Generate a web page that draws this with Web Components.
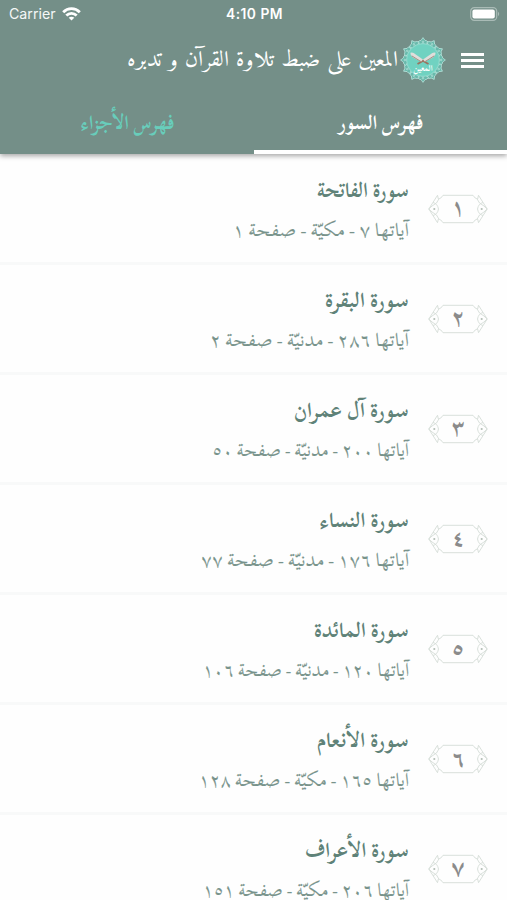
<!DOCTYPE html>
<html lang="ar">
<head>
<meta charset="utf-8">
<title>المعين</title>
<style>
  body{
    margin: 0;
    background: #fefefe;
    font-family: "Scheherazade New", "Scheherazade", "Amiri", "Noto Naskh Arabic", "DejaVu Sans", sans-serif;
    overflow: hidden;
  }
</style>
</head>
<body>
<quran-app></quran-app>

<script>
// a single line of rtl text, set to a known width
class FitText extends HTMLElement {

  connectedCallback() {
    let w = this.getAttribute( "width" );
    let h = this.getAttribute( "height" ) || 32;
    let size = this.getAttribute( "size" ) || 18;
    let weight = this.getAttribute( "weight" ) || 400;
    this.attachShadow( {mode:"open"} );
    this.shadowRoot.innerHTML = `
      <style>
        :host{ display: block; width: ${w}px; height: ${h}px; }
        svg{ display: block; overflow: visible; }
        text{ fill: currentColor; direction: rtl; }
        :host([plain]) text{
          font-feature-settings: "calt" 0, "liga" 0;
          word-spacing: -1px;
          stroke: currentColor;
          stroke-width: .15px;
        }
      </style>
      <svg width="${w}" height="${h}">
        <text x="${w}" y="${h - 10}" font-size="${size}" font-weight="${weight}"
          textLength="${w}" lengthAdjust="spacingAndGlyphs"></text>
      </svg>
    `;
    this.shadowRoot.querySelector("text").textContent = this.getAttribute( "text" );
  }
}
window.customElements.define( "fit-text", FitText );


const statusTemplate = document.createElement("template");
statusTemplate.innerHTML = `
  <style>
    :host{
      display: grid;
      grid-template-columns: 1fr auto 1fr;
      align-items: center;
      height: 27px;
      padding: 0 7px 0 9px;
      font: 14.2px Inter, sans-serif;
      color: #f4f8f7;
    }
    .left{ display: flex; align-items: center; gap: 6px; }
    .time{ font-weight: 600; font-size: 13.8px; letter-spacing: .5px; color: #fff; }
    .battery{ justify-self: end; }
    svg{ display: block; }
  </style>
  <div class="left">
    <span>Carrier</span>
    <svg width="19" height="14" viewBox="0 0 19 14" fill="none" stroke="#fff" stroke-width="2.8">
      <path d="M1.2 5.2C5.8.5 13.2.5 17.8 5.2"/>
      <path d="M4.3 8.6C7.3 5.7 11.7 5.7 14.7 8.6"/>
      <path d="M9.5 13.6 6.7 10.8C8.3 9.3 10.7 9.3 12.3 10.8Z" fill="#fff" stroke="none"/>
    </svg>
  </div>
  <span class="time">4:10 PM</span>
  <svg class="battery" width="30" height="14" viewBox="0 0 30 14">
    <rect x=".7" y=".7" width="26" height="12.6" rx="3.6" fill="none" stroke="#a9bbb6" stroke-width="1.2"/>
    <rect x="2.4" y="2.4" width="22.4" height="9.2" rx="2" fill="#fff"/>
    <path d="M28 4.8Q30.4 7 28 9.2Z" fill="#a9bbb6"/>
  </svg>
`;

class StatusBar extends HTMLElement {
  constructor() {
    super();
    this.attachShadow( {mode:"open"} );
    this.shadowRoot.appendChild( statusTemplate.content.cloneNode(true) );
  }
}
window.customElements.define( "status-bar", StatusBar );


class AppLogo extends HTMLElement {
  constructor() {
    super();
    this.attachShadow( {mode:"open"} );
    // scalloped lace ring, one petal every 30 degrees
    let petals = "";
    for( let a = 0; a < 360; a += 30 )
      petals += `<g transform="rotate(${a} 23 23)">
        <path d="M17.5 5.6Q19 3.2 21 3.4L23 .6L25 3.4Q27 3.2 28.5 5.6Q26 8.4 23 6.6Q20 8.4 17.5 5.6Z"/>
        <circle cx="23" cy="4.8" r=".8"/></g>`;
    this.shadowRoot.innerHTML = `
      <style>
        :host{ display: block; width: 46px; height: 46px; }
        svg{ display: block; }
      </style>
      <svg width="46" height="46" viewBox="0 0 46 46">
        <circle cx="23" cy="23" r="18.8" fill="#82c9bd"/>
        <g fill="#69b9ab" stroke="#b5e2da" stroke-width=".8">${petals}</g>
        <circle cx="23" cy="23" r="16.2" fill="#70d2c1" stroke="#8fdccf" stroke-width=".7"/>
        <path d="M17.5 27 31 19.2M28.5 27 15 19.2" stroke="#9a7460" stroke-width="1.9"/>
        <path d="M10.4 15.7Q13.4 15 15.4 17.2L23 22.6 21 24.8 12.6 20.2Q10.3 18.8 10.4 15.7Z" fill="#e0dedb"/>
        <path d="M35.6 15.7Q32.6 15 30.6 17.2L23 22.6 25 24.8 33.4 20.2Q35.7 18.8 35.6 15.7Z" fill="#e0dedb"/>
        <path d="M11.8 18.9 21.3 24.8M34.2 18.9 24.7 24.8" stroke="#a3877a" stroke-width=".9"/>
        <text x="23" y="33.5" text-anchor="middle" font-size="9" font-weight="700" fill="#fff"
          textLength="19" lengthAdjust="spacingAndGlyphs">المعين</text>
      </svg>
    `;
  }
}
window.customElements.define( "app-logo", AppLogo );


const headerTemplate = document.createElement("template");
headerTemplate.innerHTML = `
  <style>
    :host{
      display: block;
      height: 154px;
      background: #748f88;
      color: #fff;
      position: relative;
      box-shadow: 0 2px 5px rgba(0,0,0,.35);
    }
    .bar{
      display: flex;
      flex-direction: row-reverse;
      align-items: center;
      height: 66px;
      padding-right: 23px;
    }
    .menu{
      display: grid;
      gap: 3px;
      width: 23px;
    }
    .menu i{ height: 3px; background: #fff; }
    app-logo{ margin-right: 15px; }
    .bar fit-text{ margin-right: 2px; font-family: "Amiri", "DejaVu Sans", sans-serif; }
    .tabs{ display: grid; grid-template-columns: 1fr 1fr; height: 61px; }
    .tab{
      display: flex;
      justify-content: center;
      box-sizing: border-box;
      padding-top: 7px;
    }
    .tab.on{ border-bottom: 4px solid #fff; }
    .tab.off{ color: #68cdbb; padding-left: 2px; }
  </style>
  <status-bar></status-bar>
  <div class="bar">
    <div class="menu"><i></i><i></i><i></i></div>
    <app-logo></app-logo>
    <fit-text width="271" height="31" size="22" text="المعين على ضبط تلاوة القرآن و تدبره"></fit-text>
  </div>
  <div class="tabs">
    <div class="tab off"><fit-text width="93" height="39" size="20" weight="700" text="فهرس الأجزاء"></fit-text></div>
    <div class="tab on"><fit-text width="85" height="39" size="20" weight="700" text="فهرس السور"></fit-text></div>
  </div>
`;

class AppHeader extends HTMLElement {
  constructor() {
    super();
    this.attachShadow( {mode:"open"} );
    this.shadowRoot.appendChild( headerTemplate.content.cloneNode(true) );
  }
}
window.customElements.define( "app-header", AppHeader );


const badgeSide = `
  <path d="M9.5 1.3 .8 15 9.5 28.7M9.5 1.3Q12 6 8.5 9 3.5 12 .8 15 3.5 18 8.5 21 12 24 9.5 28.7"/>
  <path d="M5 8.5Q9.5 9.5 10.5 15 9.5 20.5 5 21.5"/>
  <circle cx="6.3" cy="15" r="1.1" fill="#b3beb6" stroke="none"/>
`;
const badgeTemplate = document.createElement("template");
badgeTemplate.innerHTML = `
  <style>
    :host{
      display: grid;
      grid-template-rows: 30px;
      place-items: center;
      width: 60px;
      height: 30px;
      font-size: 23px;
      font-weight: 700;
      line-height: 30px;
      color: #8b8b8b;
    }
    svg, span{ grid-area: 1 / 1; }
    svg{ display: block; }
    span{ padding-bottom: 1px; }
  </style>
  <svg width="60" height="30" viewBox="0 0 60 30" fill="none" stroke="#d5ddd7" stroke-width=".9">
    <path d="M15 1.3H45Q46.8 4.6 50 5.4M15 28.7H45Q46.8 25.4 50 24.6M15 1.3Q13.2 4.6 10 5.4M15 28.7Q13.2 25.4 10 24.6"/>
    <g>${badgeSide}</g>
    <g transform="matrix(-1 0 0 1 60 0)">${badgeSide}</g>
  </svg>
  <span><slot></slot></span>
`;

class NumberBadge extends HTMLElement {
  constructor() {
    super();
    this.attachShadow( {mode:"open"} );
    this.shadowRoot.appendChild( badgeTemplate.content.cloneNode(true) );
  }
}
window.customElements.define( "number-badge", NumberBadge );


class SuraRow extends HTMLElement {
  connectedCallback() {
    let get = name => this.getAttribute( name );
    this.attachShadow( {mode:"open"} );
    this.shadowRoot.innerHTML = `
      <style>
        :host{
          display: flex;
          flex-direction: row-reverse;
          align-items: center;
          gap: 19px;
          box-sizing: border-box;
          height: 110px;
          padding-right: 19px;
          border-bottom: 3px solid #f8f9f9;
        }
        .lines{ display: flex; flex-direction: column; align-items: flex-end; padding-bottom: 4px; }
        .name{ color: #5f8278; }
        .info{ color: #78938b; }
      </style>
      <number-badge>${get("number")}</number-badge>
      <div class="lines">
        <fit-text class="name" width="${get("w1")}" height="40" size="21" weight="700" text="${get("name")}"></fit-text>
        <fit-text plain class="info" width="${get("w2")}" height="39" size="19" text="${get("info")}"></fit-text>
      </div>
    `;
  }
}
window.customElements.define( "sura-row", SuraRow );


const suras = [
  [ "١", "سورة الفاتحة", 92, "آياتها ٧ - مكيّة - صفحة ١", 176 ],
  [ "٢", "سورة البقرة", 84, "آياتها ٢٨٦ - مدنيّة - صفحة ٢", 199 ],
  [ "٣", "سورة آل عمران", 115, "آياتها ٢٠٠ - مدنيّة - صفحة ٥٠", 197 ],
  [ "٤", "سورة النساء", 89, "آياتها ١٧٦ - مدنيّة - صفحة ٧٧", 208 ],
  [ "٥", "سورة المائدة", 95, "آياتها ١٢٠ - مدنيّة - صفحة ١٠٦", 206 ],
  [ "٦", "سورة الأنعام", 92, "آياتها ١٦٥ - مكيّة - صفحة ١٢٨", 210 ],
  [ "٧", "سورة الأعراف", 104, "آياتها ٢٠٦ - مكيّة - صفحة ١٥١", 206 ]
];

class QuranApp extends HTMLElement {
  constructor() {
    super();
    this.attachShadow( {mode:"open"} );
    this.shadowRoot.innerHTML = `
      <style>
        :host{ display: block; height: 900px; overflow: hidden; }
        main{ padding-top: 1px; }
      </style>
      <app-header></app-header>
      <main>${suras.map( ([n, name, w1, info, w2]) =>
        `<sura-row number="${n}" name="${name}" w1="${w1}" info="${info}" w2="${w2}"></sura-row>` ).join("")}</main>
    `;
  }
}
window.customElements.define( "quran-app", QuranApp );
</script>
</body>
</html>
